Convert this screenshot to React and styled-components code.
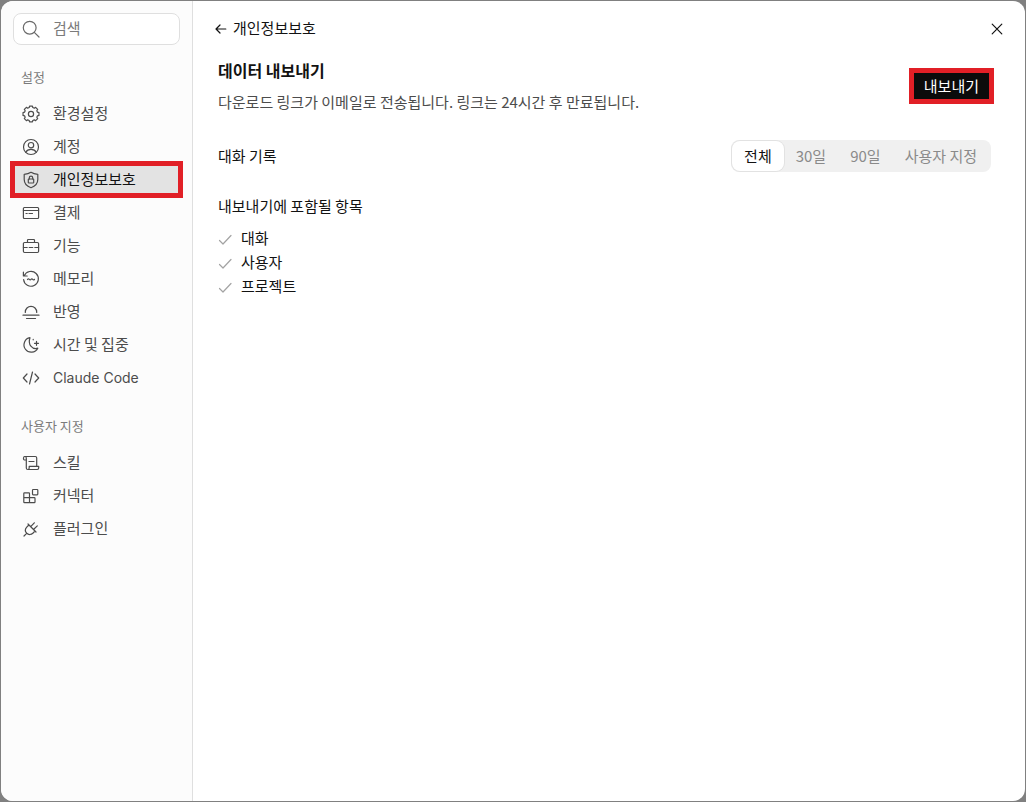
import React, { useState } from 'react';
import styled, { createGlobalStyle, css } from 'styled-components';

const GlobalStyle = createGlobalStyle`
  *, *::before, *::after { box-sizing: border-box; }
  body {
    margin: 0;
    background: #808080;
    font-family: "Noto Sans CJK KR", "Noto Sans", sans-serif;
    font-size: 15px;
    line-height: 20px;
    color: #121212;
  }
  button, input { font: inherit; color: inherit; }
`;

const marked = css`
  outline: 5px solid #e11f26;
  outline-offset: -2px;
`;

const Page = styled.div`
  display: flex;
  min-height: 100vh;
  padding: 1px;
`;

const Dialog = styled.div`
  display: flex;
  flex: 1;
  border-radius: 12px;
  overflow: hidden;
  background: #ffffff;
`;

const Sidebar = styled.aside`
  flex: none;
  width: 192px;
  padding: 12px;
  background: #fcfcfc;
  border-right: 1px solid #dfdfdf;
`;

const SearchBox = styled.label`
  display: flex;
  align-items: center;
  gap: 12px;
  height: 32px;
  margin-bottom: 1px;
  padding: 0 7px;
  border: 1px solid #dfdfdf;
  border-radius: 8px;
  background: #ffffff;
`;

const SearchInput = styled.input`
  flex: 1;
  min-width: 0;
  padding: 0 0 2px;
  border: 0;
  outline: 0;
  background: transparent;
  &::placeholder { color: #7b7b7b; opacity: 1; }
`;

const Section = styled.section`
  padding-top: 21px;
`;

const SectionTitle = styled.h2`
  margin: 0 0 11px;
  padding: 0 8px;
  font-size: 13px;
  font-weight: 400;
  line-height: 20px;
  color: #7b7b7b;
`;

const PlainList = styled.ul`
  margin: 0;
  padding: 0;
  list-style: none;
`;

const NavLink = styled.a`
  display: flex;
  align-items: center;
  gap: 12px;
  height: 31px;
  margin-bottom: 2px;
  padding: 0 8px;
  color: ${(p) => (p.$active ? '#121212' : '#4c4c4c')};
  background: ${(p) => (p.$active ? '#e3e3e3' : 'transparent')};
  text-decoration: none;
  white-space: nowrap;
  ${(p) => p.$active && marked}
`;

const LinkText = styled.span`
  padding-bottom: 2px;
  ${(p) => p.$latin && css`
    padding-bottom: 0;
    font-family: Inter, sans-serif;
    font-size: 14px;
  `}
`;

const Glyph = styled.svg`
  flex: none;
  width: 20px;
  height: 20px;
  fill: none;
  stroke: ${(p) => p.$color || '#4c4c4c'};
  stroke-width: 1.2;
  stroke-linecap: round;
  stroke-linejoin: round;
`;

const Main = styled.main`
  flex: 1;
  min-width: 0;
  padding: 12px 18px 24px;
`;

const TopBar = styled.header`
  display: flex;
  align-items: center;
  justify-content: space-between;
  height: 32px;
`;

const BackLink = styled.a`
  display: flex;
  align-items: center;
  gap: 2px;
  color: #121212;
  text-decoration: none;
`;

const CloseButton = styled.button`
  display: flex;
  padding: 0;
  border: 0;
  background: transparent;
  cursor: pointer;
`;

const Content = styled.div`
  padding: 15px 16px 0 7px;
`;

const Row = styled.div`
  display: flex;
  align-items: center;
  justify-content: space-between;
  gap: 24px;
`;

const Title = styled.h1`
  margin: 0 0 12px;
  font-size: 16px;
  font-weight: 700;
  line-height: 20px;
`;

const Description = styled.p`
  margin: 0;
  color: #4c4c4c;
`;

const ExportButton = styled.button`
  flex: none;
  height: 30px;
  padding: 0 12px;
  border: 0;
  background: #0b0b0b;
  color: #ffffff;
  line-height: 20px;
  cursor: pointer;
  ${marked}
`;

const RangeRow = styled.fieldset`
  display: flex;
  align-items: center;
  justify-content: space-between;
  min-width: 0;
  margin: 28px 0 0;
  padding: 0;
  border: 0;
`;

const Segments = styled.div`
  display: flex;
  padding: 1px 2px 1px 1px;
  border-radius: 8px;
  background: #f0f0f0;
`;

const Segment = styled.label`
  position: relative;
  padding: 5px 12px;
  border-radius: 8px;
  color: ${(p) => (p.$active ? '#121212' : '#8a8a8a')};
  background: ${(p) => (p.$active ? '#ffffff' : 'transparent')};
  box-shadow: ${(p) => (p.$active ? '0 0 0 1px #e2e2e2' : 'none')};
  white-space: nowrap;
  cursor: pointer;
`;

const SegmentInput = styled.input`
  position: absolute;
  inset: 0;
  margin: 0;
  opacity: 0;
`;

const ListTitle = styled.h2`
  margin: 24px 0 10px;
  font-size: 15px;
  font-weight: 400;
  line-height: 20px;
`;

const CheckItem = styled.li`
  display: flex;
  align-items: center;
  gap: 9px;
  height: 24px;
`;

const CheckGlyph = styled(Glyph)`
  width: 14px;
  height: 14px;
`;

// Eight-lobed gear outline around (10, 10).
function gearPath() {
  const pts = [];
  for (let i = 0; i < 8; i += 1) {
    const c = (i * Math.PI) / 4;
    [[-0.27, 6.7], [-0.18, 8.1], [0.18, 8.1], [0.27, 6.7]].forEach(([d, r]) => {
      pts.push(`${(10 + r * Math.sin(c + d)).toFixed(2)} ${(10 - r * Math.cos(c + d)).toFixed(2)}`);
    });
  }
  return `M${pts.join('L')}Z`;
}

const icons = {
  search: <><circle cx="8.7" cy="8.7" r="6.4" /><path d="M13.3 13.3 18 18" /></>,
  gear: <><path d={gearPath()} /><circle cx="10" cy="10" r="2.6" /></>,
  account: (
    <>
      <circle cx="10" cy="10" r="7.5" />
      <circle cx="10" cy="8.2" r="2.7" />
      <path d="M4.8 15.2c1-2 2.9-2.900 5.200-2.900s4.200.9 5.200 2.900" />
    </>
  ),
  shield: (
    <>
      <path d="M10 2.3c2 1.3 4.2 1.9 6.800 2v5.200c0 4.200-2.600 6.700-6.800 8.200-4.200-1.500-6.800-4-6.800-8.200V4.300c2.600-.1 4.800-.7 6.800-2Z" />
      <rect x="7.300" y="9" width="5.400" height="4" rx=".5" />
      <path d="M8.300 9V7.800a1.700 1.700 0 0 1 3.400 0V9" />
    </>
  ),
  card: (
    <>
      <rect x="2.400" y="4.500" width="15.200" height="11" rx="1" />
      <path d="M2.400 7.500h15.200M5 10.500h1.200M8 10.500h3.500" />
    </>
  ),
  toolbox: (
    <>
      <rect x="2.400" y="6.500" width="15.200" height="10" rx="1.200" />
      <path d="M6.500 6.500V4.300c0-.5.300-.8.800-.8h5.400c.5 0 .8.300.8.800v2.200M2.400 11.500h3.800M8.200 11.500h3.600M13.800 11.500h3.800" />
    </>
  ),
  memory: (
    <>
      <path d="M3.200 6.800A7.400 7.400 0 1 1 2.600 10.500M2.400 3.200v3.800h3.800" />
      <path d="M6.500 10.500c.6-.8 1.200-.8 1.800-.1s1.200.7 1.700 0 1.200-.7 1.700 0 1.200.7 1.800-.1" />
    </>
  ),
  sunset: <path d="M2 13.200h16M4.300 10.500V10a5.700 5.700 0 0 1 11.400 0v.5M5.500 16.500h9" />,
  moon: (
    <>
      <path d="M9 2.700a7.300 7.300 0 1 0 7.800 10.500C11.200 14.800 6.500 9.500 9 2.700Z" />
      <path d="M15.500 6.300v4M13.500 8.300h4M12.200 4.400v.4" />
    </>
  ),
  code: <path d="M6 6 2.300 10 6 14M14 6l3.700 4-3.700 4M11.500 4l-3 12" />,
  scroll: (
    <>
      <path d="M5.300 7H3.800A1.300 1.300 0 0 1 2.500 5.700V5c0-.9.600-1.500 1.400-1.500h10.400c.8 0 1.400.6 1.400 1.500v8.300" />
      <path d="M3.900 3.500c.8 0 1.400.6 1.400 1.500v10c0 1 .6 1.500 1.500 1.500h9.500c.9 0 1.400-.6 1.400-1.400v-1.800H8.200V15c0 .9-.6 1.500-1.400 1.500M8 8.500h5" />
    </>
  ),
  blocks: (
    <>
      <path d="M2.800 7.500c0-.4.300-.7.700-.7h4.300c.4 0 .7.300.7.700v9.200h-5a.7.7 0 0 1-.7-.7ZM2.800 11.700h10.500c.4 0 .7.300.7.700V16c0 .4-.3.700-.7.700H8.500" />
      <rect x="11.500" y="3.500" width="5.300" height="5.300" rx=".7" />
    </>
  ),
  plug: (
    <path d="m7 5 8 8M8 6 6 7.800c-2 2-2 4.600-.3 6.400s4.400 1.800 6.400-.2l1.900-2M5.700 14.300 3 17M9.700 7.600l3.600-3.800M12.500 10.500l3.800-3.600" />
  ),
  back: <path d="M14.800 10H5.200M9 6l-4 4 4 4" />,
  close: <path d="m5.200 5.200 9.600 9.600M14.800 5.200l-9.600 9.600" />,
};

function Icon({ name, color }) {
  return <Glyph viewBox="0 0 20 20" aria-hidden="true" $color={color}>{icons[name]}</Glyph>;
}

const sections = [
  {
    title: '설정',
    items: [
      { icon: 'gear', label: '환경설정' },
      { icon: 'account', label: '계정' },
      { icon: 'shield', label: '개인정보보호', active: true },
      { icon: 'card', label: '결제' },
      { icon: 'toolbox', label: '기능' },
      { icon: 'memory', label: '메모리' },
      { icon: 'sunset', label: '반영' },
      { icon: 'moon', label: '시간 및 집중' },
      { icon: 'code', label: 'Claude Code', latin: true },
    ],
  },
  {
    title: '사용자 지정',
    items: [
      { icon: 'scroll', label: '스킬' },
      { icon: 'blocks', label: '커넥터' },
      { icon: 'plug', label: '플러그인' },
    ],
  },
];

const ranges = ['전체', '30일', '90일', '사용자 지정'];
const included = ['대화', '사용자', '프로젝트'];

export default function App() {
  const [range, setRange] = useState('전체');
  return (
    <>
      <GlobalStyle />
      <Page>
        <Dialog role="dialog" aria-label="설정">
          <Sidebar>
            <SearchBox>
              <Icon name="search" color="#6b6b6b" />
              <SearchInput type="text" placeholder="검색" aria-label="검색" />
            </SearchBox>
            <nav>
              {sections.map((section) => (
                <Section key={section.title}>
                  <SectionTitle>{section.title}</SectionTitle>
                  <PlainList>
                    {section.items.map((item) => (
                      <li key={item.label}>
                        <NavLink href="#" $active={item.active} aria-current={item.active ? 'page' : undefined}>
                          <Icon name={item.icon} />
                          <LinkText $latin={item.latin}>{item.label}</LinkText>
                        </NavLink>
                      </li>
                    ))}
                  </PlainList>
                </Section>
              ))}
            </nav>
          </Sidebar>
          <Main>
            <TopBar>
              <BackLink href="#">
                <Icon name="back" color="#121212" />
                <LinkText>개인정보보호</LinkText>
              </BackLink>
              <CloseButton type="button" aria-label="닫기">
                <Icon name="close" color="#121212" />
              </CloseButton>
            </TopBar>
            <Content>
              <Row>
                <div>
                  <Title>데이터 내보내기</Title>
                  <Description>다운로드 링크가 이메일로 전송됩니다. 링크는 24시간 후 만료됩니다.</Description>
                </div>
                <ExportButton type="button">내보내기</ExportButton>
              </Row>
              <RangeRow aria-label="대화 기록">
                <span>대화 기록</span>
                <Segments>
                  {ranges.map((label) => (
                    <Segment key={label} $active={label === range}>
                      <SegmentInput
                        type="radio"
                        name="range"
                        checked={label === range}
                        onChange={() => setRange(label)}
                      />
                      {label}
                    </Segment>
                  ))}
                </Segments>
              </RangeRow>
              <ListTitle>내보내기에 포함될 항목</ListTitle>
              <PlainList>
                {included.map((label) => (
                  <CheckItem key={label}>
                    <CheckGlyph viewBox="0 0 14 14" aria-hidden="true" $color="#a3a3a3">
                      <path d="m1.500 9.500 3.500 3.500 8-8.500" />
                    </CheckGlyph>
                    {label}
                  </CheckItem>
                ))}
              </PlainList>
            </Content>
          </Main>
        </Dialog>
      </Page>
    </>
  );
}
